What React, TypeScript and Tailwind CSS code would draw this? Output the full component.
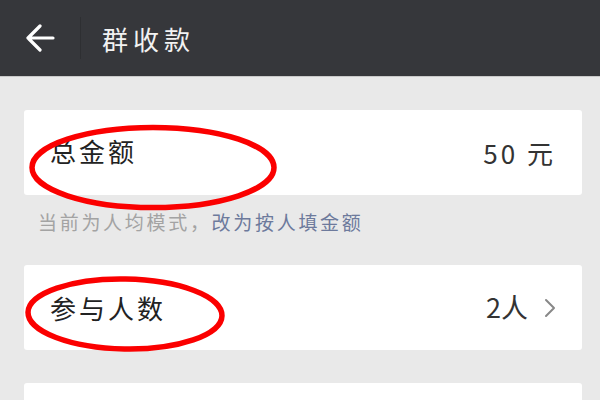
const cjk = "font-['Noto_Sans_CJK_SC','Noto_Sans',sans-serif]";

function Row({
  label,
  labelClass,
  className,
  children,
}: {
  label: string;
  labelClass: string;
  className?: string;
  children?: React.ReactNode;
}) {
  return (
    <div
      className={`mx-6 flex h-[85px] w-[558px] items-center justify-between rounded-[3px] bg-white pl-[26px] pr-[26px] text-[#222] ${className ?? ""}`}
    >
      <span className={`text-[26px] tracking-[3px] ${labelClass}`}>{label}</span>
      {children}
    </div>
  );
}

function Ellipse({ className, viewBox, cx, cy, rx, ry, rotate }: {
  className: string;
  viewBox: string;
  cx: number;
  cy: number;
  rx: number;
  ry: number;
  rotate: number;
}) {
  return (
    <svg className={`pointer-events-none absolute ${className}`} viewBox={viewBox} fill="none">
      <ellipse
        cx={cx}
        cy={cy}
        rx={rx}
        ry={ry}
        stroke="#fb0000"
        strokeWidth="5.5"
        transform={`rotate(${rotate} ${cx} ${cy})`}
      />
    </svg>
  );
}

export default function App() {
  return (
    <div className={`relative h-[400px] w-[600px] overflow-hidden bg-[#e9e9e9] ${cjk}`}>
      <header className="flex h-[77px] items-center border-b border-[#c9c9c9] bg-[#36373b]">
        <svg className="ml-[26px] h-[30px] w-[30px]" viewBox="0 0 30 30" fill="none">
          <path
            d="M2 15h25M14 3 2 15l12 12"
            stroke="#fff"
            strokeWidth="3.2"
            strokeLinecap="round"
            strokeLinejoin="round"
          />
        </svg>
        <div className="ml-[24px] h-[42px] w-px bg-[#2e2f32]" />
        <h1 className="ml-[21px] text-[26px] font-normal tracking-[5px] text-[#f2f2f2]">群收款</h1>
      </header>

      <main className="pt-[33px]">
        <Row label="总金额" labelClass="-mt-[4px]">
          <span className="text-[26px] tracking-[3px] text-[#333]">50 元</span>
        </Row>
        <p className="ml-[38px] mt-[14px] h-[56px] text-[19px] leading-[26px] tracking-[2.7px] text-[#a3a3a3]">
          当前为人均模式，<span className="text-[#6d7a9c]">改为按人填金额</span>
        </p>
        <Row label="参与人数" labelClass="mt-[0px]">
          <span className="flex items-center gap-[16px]">
            <span className="text-[27px] text-[#333]">2人</span>
            <svg className="h-[20px] w-[12px]" viewBox="0 0 12 20" fill="none">
              <path d="m2 2 8 8-8 8" stroke="#888" strokeWidth="2" strokeLinecap="round" strokeLinejoin="round" />
            </svg>
          </span>
        </Row>
        <div className="mx-6 mt-[33px] h-[85px] w-[558px] rounded-[3px] bg-white" />
      </main>

      <Ellipse className="left-[24px] top-[120px] h-[96px] w-[258px]" viewBox="0 0 258 96" cx={129} cy={47.5} rx={121} ry={40} rotate={0} />
      <Ellipse className="left-[21px] top-[272px] h-[84px] w-[210px]" viewBox="0 0 210 84" cx={104} cy={42} rx={97} ry={35} rotate={1} />
    </div>
  );
}
